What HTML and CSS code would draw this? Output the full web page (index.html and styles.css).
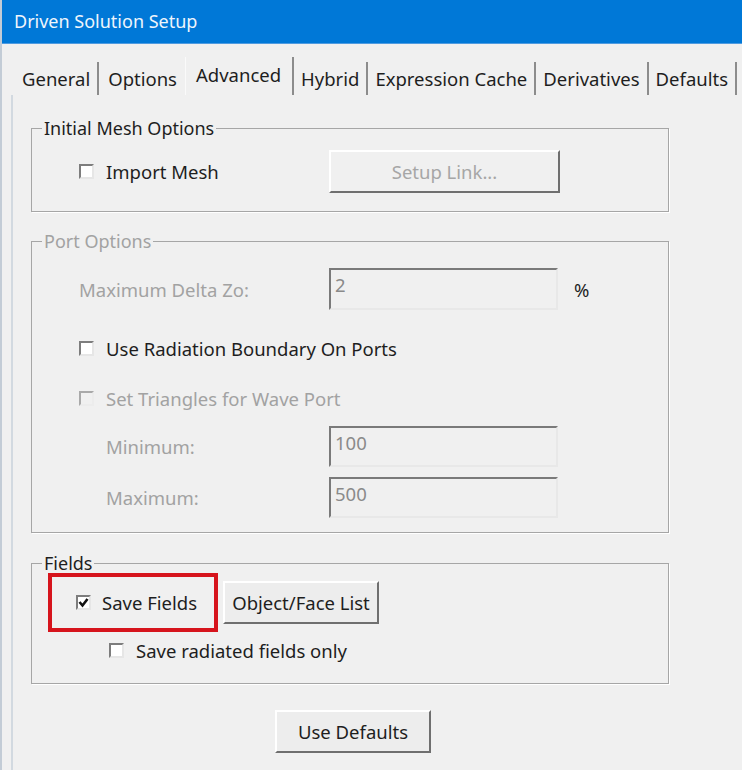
FILE: index.html
```html
<!DOCTYPE html>
<html lang="en">
<head>
<meta charset="UTF-8" />
<title>Driven Solution Setup</title>
<link rel="stylesheet" href="styles.css">
</head>
<body>
  <div class="window">
    <div class="titlebar">Driven Solution Setup</div>

    <div class="tabs">
      <span class="tab">General</span>
      <span class="tab before-active">Options</span>
      <span class="tab active">Advanced</span>
      <span class="tab">Hybrid</span>
      <span class="tab">Expression Cache</span>
      <span class="tab">Derivatives</span>
      <span class="tab">Defaults</span>
    </div>

    <div class="panel">
      <fieldset class="group mesh-group">
        <legend>Initial Mesh Options</legend>
        <div class="row tall">
          <label class="check field-label"><span class="box"></span>Import Mesh</label>
          <button class="btn wide" disabled>Setup Link...</button>
        </div>
      </fieldset>

      <fieldset class="group port-group">
        <legend class="disabled">Port Options</legend>
        <div class="row r1">
          <span class="field-label disabled">Maximum Delta Zo:</span>
          <div class="text-input">2</div>
          <span class="unit">%</span>
        </div>
        <div class="row r2">
          <label class="check"><span class="box"></span>Use Radiation Boundary On Ports</label>
        </div>
        <div class="row r3">
          <label class="check disabled"><span class="box"></span>Set Triangles for Wave Port</label>
        </div>
        <div class="row r4">
          <span class="field-label indent disabled">Minimum:</span>
          <div class="text-input">100</div>
        </div>
        <div class="row r5">
          <span class="field-label indent disabled">Maximum:</span>
          <div class="text-input">500</div>
        </div>
      </fieldset>

      <fieldset class="group fields-group">
        <legend>Fields</legend>
        <div class="row fields-row">
          <div class="highlight">
            <label class="check tight">
              <span class="box">
                <svg width="11" height="11" viewBox="0 0 11 11"><polyline points="1.5,5 4.5,8.5 9.5,2" fill="none" stroke="#111" stroke-width="2.6"/></svg>
              </span>Save Fields
            </label>
          </div>
          <button class="btn list-btn">Object/Face List</button>
        </div>
        <div class="row radiated-row">
          <label class="check"><span class="box"></span>Save radiated fields only</label>
        </div>
      </fieldset>

      <div class="footer">
        <button class="btn list-btn">Use Defaults</button>
      </div>
    </div>
  </div>
</body>
</html>
```

FILE: styles.css
```css
body {
  margin: 0;
  background: #f0f0f0;
  font-family: "Noto Sans", "Open Sans", sans-serif;
  font-size: 18.5px;
  color: #1e1e1e;
}
.window {
  height: 770px;
  border-left: 2px solid #c3ccd6;
  box-sizing: border-box;
  overflow: hidden;
}
.titlebar {
  height: 43px;
  line-height: 42px;
  font-size: 18px;
  background: #0078d7;
  color: #eef5fc;
  padding-left: 12px;
  border-bottom: 1px solid #4f9be0;
}
.tabs {
  display: flex;
  align-items: flex-end;
  height: 35px;
  margin-top: 16px;
  padding-left: 12px;
  font-size: 18.5px;
}
.tab {
  height: 33px;
  line-height: 33px;
  padding: 0 7px;
  border-right: 2px solid #8c8c8c;
  white-space: nowrap;
}
.tab:first-child { padding-left: 8px; }
.tab.before-active {
  border-right: none;
  padding: 0 8px 0 9px;
}
.tab.active {
  height: 38px;
  line-height: 36px;
  padding: 0 11px 0 10px;
  border-left: 1px solid #fafafa;
}
.panel {
  margin-left: 9px;
  border-left: 2px solid #d2d9e0;
  padding: 23px 0 20px 18px;
}
.group {
  width: 638px;
  box-sizing: border-box;
  margin: 0;
  padding: 0;
  border: 1px solid #a6a6a6;
  box-shadow: 1px 1px 0 #ffffff;
}
.group legend {
  margin-left: 10px;
  padding: 0 2px;
  line-height: 20px;
  font-size: 18px;
}
.port-group { margin-top: 19px; padding-bottom: 14px; }
.fields-group { margin-top: 20px; padding-bottom: 23px; }
.mesh-group { padding-bottom: 18px; }

.disabled { color: #a2a2a2; }

.row {
  display: flex;
  align-items: center;
  padding-left: 47px;
}
.tall { height: 43px; margin-top: 12px; }
.r1 { height: 42px; margin-top: 17px; }
.r2 { height: 42px; margin-top: 17px; }
.r3 { height: 42px; margin-top: 8px; }
.r4 { height: 41px; margin-top: 7px; }
.r5 { height: 41px; margin-top: 10px; }

.field-label {
  width: 250px;
  flex: none;
  box-sizing: border-box;
}
.field-label.indent { padding-left: 27px; }

.check {
  display: flex;
  align-items: center;
  gap: 12px;
  white-space: nowrap;
}
.check.tight { gap: 11px; }
.box {
  width: 15px;
  height: 15px;
  box-sizing: border-box;
  background: #ffffff;
  border: 2px solid;
  border-color: #7d7d7d #e6e6e6 #e6e6e6 #7d7d7d;
  display: flex;
  align-items: center;
  justify-content: center;
}
.check.disabled .box {
  background: #f0f0f0;
  border-color: #a9a9a9 #ececec #ececec #a9a9a9;
}

.text-input {
  width: 229px;
  height: 42px;
  box-sizing: border-box;
  padding: 5px 4px;
  line-height: 20px;
  color: #8a8a8a;
  background: #f0f0f0;
  border: 2px solid;
  border-color: #7a7a7a #e8e8e8 #e8e8e8 #7a7a7a;
}
.r4 .text-input, .r5 .text-input { height: 41px; }
.unit { margin-left: 16px; }

.btn {
  font-family: inherit;
  font-size: 18.5px;
  color: #1e1e1e;
  height: 43px;
  background: #ededed;
  border: 2px solid;
  border-color: #ffffff #6f6f6f #6f6f6f #ffffff;
  padding: 0;
}
.btn:disabled { color: #a6a6a6; background: #f0f0f0; }
.btn.wide { width: 231px; }
.list-btn { width: 156px; }

.fields-row { padding-left: 16px; }
.highlight {
  width: 170px;
  height: 59px;
  box-sizing: border-box;
  border: 4px solid #d6141c;
  padding-left: 24px;
  display: flex;
  align-items: center;
}
.fields-row .list-btn { margin-left: 5px; }
.radiated-row { padding-left: 77px; height: 20px; margin-top: 8px; }

.footer { margin-top: 26px; padding-left: 244px; }
```
